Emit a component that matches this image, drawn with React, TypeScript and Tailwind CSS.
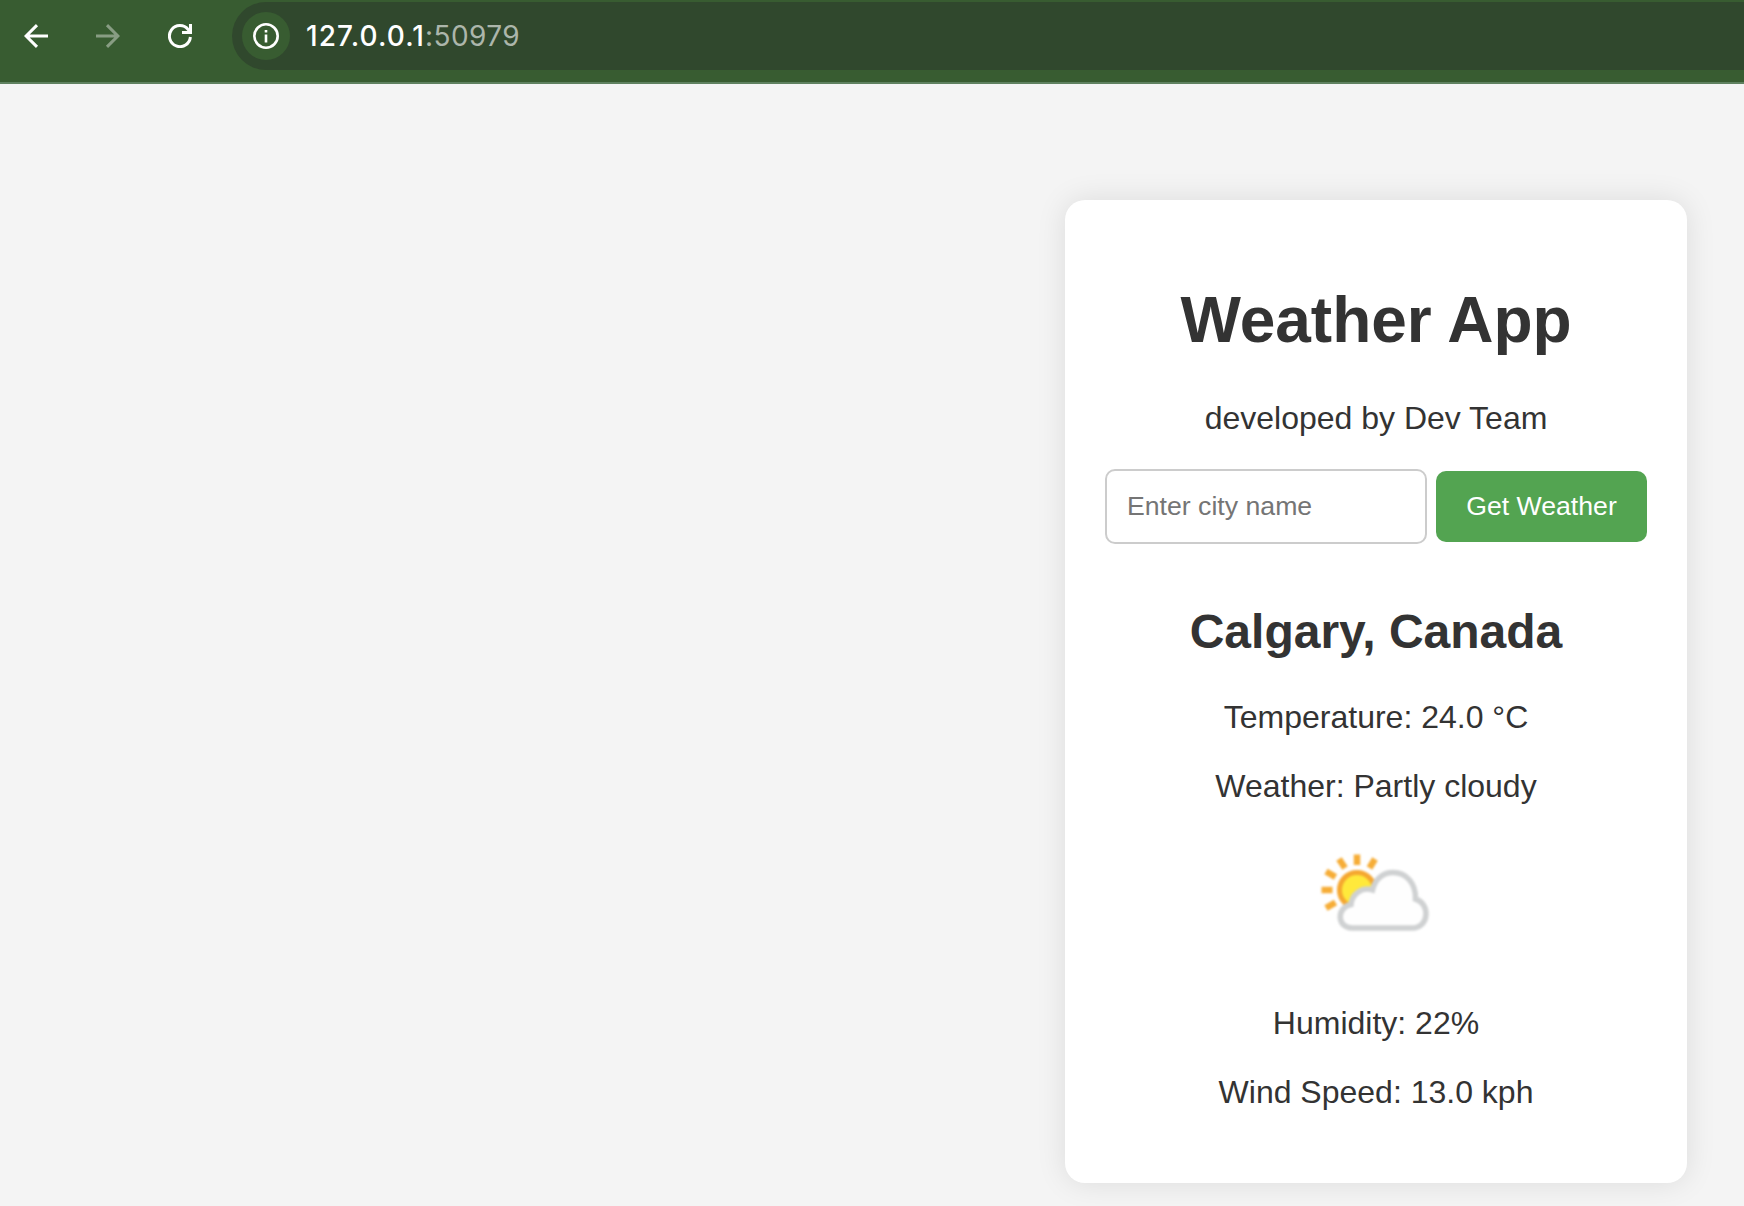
import React from 'react';

function BackArrow() {
  return (
    <svg width="24" height="24" viewBox="0 0 24 24" fill="none" stroke="currentColor" strokeWidth="3">
      <path d="M24 12H2.5M13 1.1 2.1 12 13 22.9" />
    </svg>
  );
}

function Reload() {
  return (
    <svg width="24" height="24" viewBox="0 0 24 24" fill="none" stroke="currentColor" strokeWidth="3">
      <path d="M22.4 13A10.5 10.5 0 1 1 20.2 5.6L22 8" />
      <path d="M22.5 0V8.5H14" />
    </svg>
  );
}

function Info() {
  return (
    <svg width="26" height="26" viewBox="0 0 26 26" fill="none">
      <circle cx="13" cy="13" r="11.7" stroke="white" strokeWidth="2.6" />
      <path d="M13 11.4V19.4M13 7V9.6" stroke="white" strokeWidth="2.6" />
    </svg>
  );
}

function PartlyCloudy() {
  return (
    <svg className="blur-[0.8px]" width="128" height="128" viewBox="0 0 128 128" fill="none">
      <g stroke="#f6ad37" strokeWidth="6.5">
        <path d="M45 25.500V36M27 30 33 39M63 30 57.500 39M14 42.500 23.500 48M9.500 61H20.500M14 79 23.500 73.500" />
      </g>
      <circle cx="45" cy="61" r="17.500" fill="#ffe93b" stroke="#f5a730" strokeWidth="5" />
      <path
        d="M40 99C24.500 99 24.500 78 39 75.500C40 65 50 57.500 60.500 61C63 50 71 43.500 81 43.500C94 43.500 104 54 103.500 70C118.500 74.500 117.500 99 100 99Z"
        fill="#fefefe"
        stroke="#cfd1d2"
        strokeWidth="5.500"
      />
    </svg>
  );
}

export default function App() {
  return (
    <div className="h-[1206px] w-[1744px] overflow-hidden bg-[#f4f4f4] font-['Liberation_Sans',Arial,sans-serif] text-[#333333]">
      <header className="flex h-[84px] border-b-2 border-[#5f8160] bg-[#385c31] pt-[2px] pl-6 text-white">
        <div className="flex h-[68px] items-center gap-12">
          <BackArrow />
          <div className="rotate-180 opacity-40">
            <BackArrow />
          </div>
          <Reload />
        </div>
        <div className="ml-10 flex h-[68px] flex-1 items-center rounded-l-full bg-[#30482d] pl-[10px]">
          <div className="flex size-12 items-center justify-center rounded-full bg-[#385c31]">
            <Info />
          </div>
          <div className="ml-4 font-[Inter,sans-serif] text-[28px] leading-9">
            <span className="font-medium tracking-[1.1px]">127.0.0.1</span>
            <span className="tracking-[0.4px] text-[#acb6ab]">:50979</span>
          </div>
        </div>
      </header>

      <main className="mt-[116px] ml-[1065px] flex h-[983px] w-[622px] flex-col items-center rounded-[20px] bg-white px-10 pt-[83px] shadow-[0_0_30px_rgba(0,0,0,0.1)]">
        <h1 className="text-[64px] leading-[74px] font-bold">Weather App</h1>
        <p className="mt-[43px] text-[32px] leading-[37px]">developed by Dev Team</p>
        <form className="mt-8 flex w-full items-center justify-between" onSubmit={(e) => e.preventDefault()}>
          <input
            className="h-[75px] w-[322px] rounded-[10px] border-2 border-[#cccccc] px-5 text-[26.67px] placeholder:text-[#757575]"
            placeholder="Enter city name"
          />
          <button className="h-[71px] w-[211px] rounded-[10px] bg-[#53a451] pb-[2px] text-[26.67px] text-white">
            Get Weather
          </button>
        </form>
        <h2 className="mt-[60px] text-[48px] leading-[55px] font-bold">Calgary, Canada</h2>
        <p className="mt-10 text-[32px] leading-[37px]">Temperature: 24.0 °C</p>
        <p className="mt-8 text-[32px] leading-[37px]">Weather: Partly cloudy</p>
        <div className="mt-6 h-32">
          <PartlyCloudy />
        </div>
        <p className="mt-12 text-[32px] leading-[37px]">Humidity: 22%</p>
        <p className="mt-8 text-[32px] leading-[37px]">Wind Speed: 13.0 kph</p>
      </main>
    </div>
  );
}
